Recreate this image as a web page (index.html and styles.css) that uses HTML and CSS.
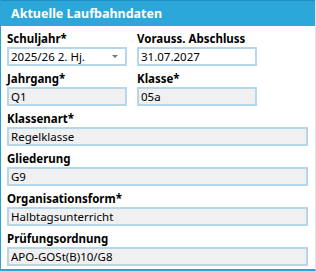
FILE: index.html
```html
<!DOCTYPE html>
<html lang="de">
<head>
  <meta charset="UTF-8" />
  <title>Aktuelle Laufbahndaten</title>
  <link rel="stylesheet" href="styles.css">
</head>
<body>

  <div class="panel">
    <div class="panel-head">Aktuelle Laufbahndaten</div>

    <div class="panel-body">
      <div class="row">
        <div class="field">
          <label>Schuljahr*</label>
          <div class="input white select">2025/26 2. Hj.<span class="caret"></span></div>
        </div>
        <div class="field">
          <label>Vorauss. Abschluss</label>
          <div class="input white">31.07.2027</div>
        </div>
      </div>

      <div class="row">
        <div class="field">
          <label>Jahrgang*</label>
          <div class="input">Q1</div>
        </div>
        <div class="field">
          <label>Klasse*</label>
          <div class="input">05a</div>
        </div>
      </div>

      <div class="field wide">
        <label>Klassenart*</label>
        <div class="input">Regelklasse</div>
      </div>

      <div class="field wide">
        <label>Gliederung</label>
        <div class="input">G9</div>
      </div>

      <div class="field wide">
        <label>Organisationsform*</label>
        <div class="input">Halbtagsunterricht</div>
      </div>

      <div class="field wide">
        <label>Prüfungsordnung</label>
        <div class="input">APO-GOSt(B)10/G8</div>
      </div>
    </div>
  </div>

</body>
</html>
```

FILE: styles.css
```css
body {
  margin: 0;
  font-family: "Noto Sans", Arial, sans-serif;
  background-color: white;
  color: #000;
}

.panel {
  width: 316px;
  height: 271px;
  box-sizing: border-box;
  border-left: 1px solid #2aa5d8;
  border-right: 1px solid #d3eaf6;
  border-bottom: 2px solid #2aa5d8;
}

.panel-head {
  height: 26px;
  box-sizing: border-box;
  border-top: 1px solid #1e8fc2;
  background-color: #2ca7da;
  color: white;
  font-size: 12.5px;
  font-weight: bold;
  line-height: 25px;
  padding-left: 10px;
}

.panel-body {
  padding: 5px 0 0 6px;
  display: flex;
  flex-direction: column;
  gap: 5px;
}

.row {
  display: flex;
  gap: 10px;
}

.field {
  display: flex;
  flex-direction: column;
  width: 120px;
}

.field.wide {
  width: 301px;
}

.field label {
  font-size: 11.5px;
  font-weight: bold;
  line-height: 16px;
  color: #000;
}

.input {
  position: relative;
  height: 19px;
  box-sizing: border-box;
  border: 2px solid #b6d6e9;
  background-color: #f0f0f0;
  font-size: 11.5px;
  line-height: 15px;
  padding-left: 2px;
}

.input.white {
  background-color: white;
}

.caret {
  position: absolute;
  right: 7px;
  top: 6px;
  border-left: 3px solid transparent;
  border-right: 3px solid transparent;
  border-top: 3px solid #777;
}
```
